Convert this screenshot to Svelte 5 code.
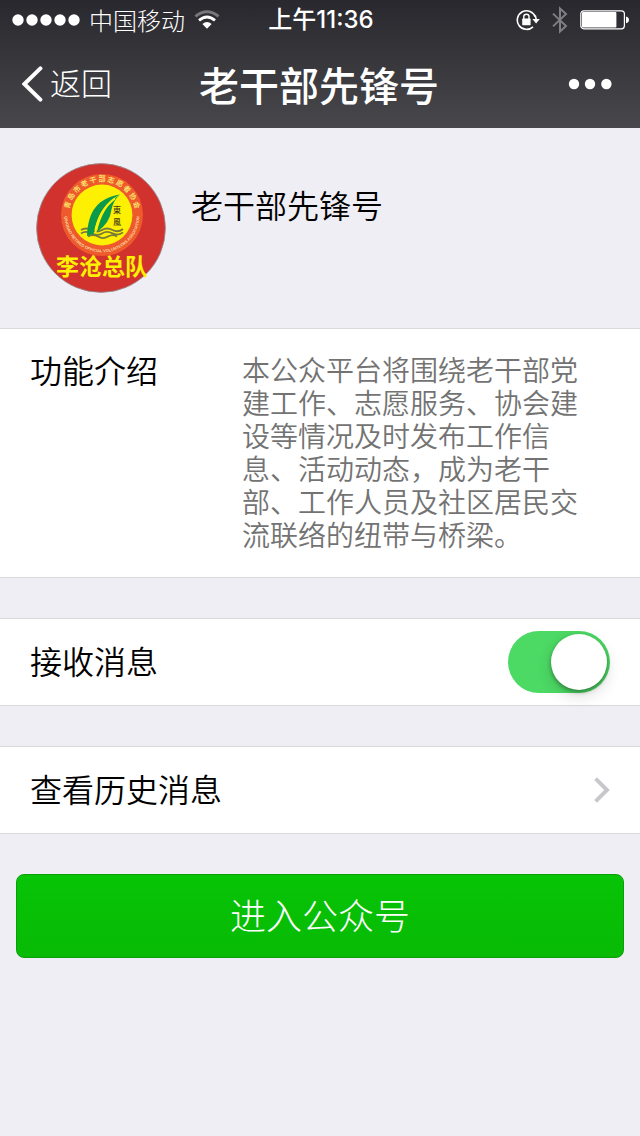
<script lang="ts">
  const account = {
    name: '老干部先锋号',
    intro:
      '本公众平台将围绕老干部党建工作、志愿服务、协会建设等情况及时发布工作信息、活动动态，成为老干部、工作人员及社区居民交流联络的纽带与桥梁。'
  };

  const signal = [0, 1, 2, 3, 4];

  let receive = $state(true);
</script>

<div class="page">
  <header class="top">
    <div class="status">
      <div class="status-left">
        <svg class="signal" viewBox="0 0 68 12" aria-hidden="true">
          {#each signal as i}
            <circle cx={6 + i * 14} cy="6" r="5.7" />
          {/each}
        </svg>
        <span class="carrier">中国移动</span>
        <svg class="wifi" viewBox="0 0 26 20" aria-hidden="true">
          <path class="faint" d="M1.4 6.4 Q13 -3 24.6 6.4" />
          <path d="M5 10.4 Q13 3.6 21 10.4" />
          <path class="solid" d="M8.4 14 Q13 9.8 17.6 14 L13 18.8 Z" />
        </svg>
      </div>
      <span class="time">上午11:36</span>
      <div class="status-right">
        <svg class="lock" viewBox="0 0 24 22" aria-hidden="true">
          <path d="M19.4 8 A9.3 9.3 0 1 0 17 17.8" />
          <path class="solid" d="M16.4 10 H23.8 L20.1 14.4 Z" />
          <path d="M19.2 6.4 L20.2 10.4" />
          <rect class="solid" x="6.2" y="9.6" width="8.4" height="6.6" rx="0.6" />
          <path class="thin" d="M7.8 10 V7.6 Q7.8 5.2 10.4 5.2 T13 7.6 V10" />
        </svg>
        <svg class="bluetooth" viewBox="0 0 16 28" aria-hidden="true">
          <path d="M1 7.6 L14 20 L8 25.4 V2.6 L14 8 L1 20.4" />
        </svg>
        <svg class="battery" viewBox="0 0 50 20" aria-hidden="true">
          <rect class="shell" x="0.8" y="0.8" width="43.6" height="18" rx="3" />
          <rect x="2" y="2" width="34.4" height="15.6" rx="1" />
          <path d="M46 6.4 Q49 7 49 9.8 Q49 12.6 46 13.2 Z" />
        </svg>
      </div>
    </div>

    <nav class="nav">
      <button class="back" type="button">
        <svg viewBox="0 0 22 36" aria-hidden="true">
          <path d="M18.4 2.4 L2.4 18 L18.4 33.6" />
        </svg>
        <span>返回</span>
      </button>
      <h1>{account.name}</h1>
      <button class="more" type="button" aria-label="更多">
        <svg viewBox="0 0 44 12" aria-hidden="true">
          <circle cx="6" cy="6" r="5.2" />
          <circle cx="22" cy="6" r="5.2" />
          <circle cx="38.4" cy="6" r="5.2" />
        </svg>
      </button>
    </nav>
  </header>

  <main>
    <section class="profile">
      <svg class="avatar" viewBox="0 0 130 130" role="img" aria-label="李沧总队">
        <defs>
          <path id="ring-top" d="M33.6 60 A33.4 33.4 0 1 1 98.4 60" />
          <path id="ring-bottom" d="M29 45 A37.6 37.6 0 1 0 103 45" />
        </defs>
        <circle cx="65" cy="65" r="64.4" fill="#d2322d" stroke="#8d9092" stroke-width="0.8" />
        <circle cx="66" cy="52" r="41" fill="#ee5a2c" />
        <circle cx="66" cy="52" r="30.4" fill="#fdf003" />
        <text class="ring-cn">
          <textPath href="#ring-top" startOffset="50%">青 岛 市 老 干 部 志 愿 者 协 会</textPath>
        </text>
        <text class="ring-en">
          <textPath href="#ring-bottom" startOffset="50%">QINGDAO RETIRED OFFICIAL VOLUNTEERS ASSOCIATION</textPath>
        </text>
        <g class="waves">
          <path d="M45 67 q5 -3 10.5 0 t10.5 0 t10.5 0 t10.5 -1" />
          <path d="M45 70.4 q5 -3 10.5 0 t10.5 0 t10.5 0 t10.5 -1" />
          <path d="M52 73.6 q5 -3 10 0 t10 0 t9 0" />
        </g>
        <path d="M51 73 C52 48 62 35 84 31.5 Q63 42 57.5 71 Z" fill="#0b9a4c" />
        <path d="M61 69 Q74 60 75.4 47 Q77 38 84 31.5 Q66 44 61 69 Z" fill="#0b9a4c" />
        <path d="M59.4 70 Q62 48 79 35.4" fill="none" stroke="#fdf003" stroke-width="2" />
        <text class="brush" x="81" y="50">東</text>
        <text class="brush" x="81" y="62">風</text>
        <text class="team" x="66" y="112">李沧总队</text>
      </svg>
      <h2>{account.name}</h2>
    </section>

    <section class="panel intro">
      <h3>功能介绍</h3>
      <p>{account.intro}</p>
    </section>

    <label class="panel row">
      <span>接收消息</span>
      <input class="switch" type="checkbox" role="switch" bind:checked={receive} />
    </label>

    <a class="panel row" href="#history">
      <span>查看历史消息</span>
      <svg class="chevron" viewBox="0 0 16 26" aria-hidden="true">
        <path d="M1.6 1.6 L13 13 L1.6 24.4" />
      </svg>
    </a>

    <div class="actions">
      <button class="enter" type="button">进入公众号</button>
    </div>
  </main>
</div>

<style>
  :global(body) {
    background: #efeef4;
  }

  .page {
    min-height: 100vh;
    background: #efeef4;
    color: #000;
    font-family: 'Noto Sans CJK SC', sans-serif;
    font-weight: 350;
  }

  h1,
  h2,
  h3,
  p {
    margin: 0;
    font-weight: 350;
  }

  button {
    padding: 0;
    border: 0;
    background: none;
    color: inherit;
    font: inherit;
    cursor: pointer;
  }

  svg {
    display: block;
    flex: none;
  }

  /* header */
  .top {
    background: linear-gradient(#29282e, #48474b);
    color: #fff;
  }

  .status,
  .nav {
    display: grid;
    grid-template-columns: 1fr auto 1fr;
    align-items: center;
  }

  .status {
    height: 40px;
    padding: 0 10px 0 12px;
    line-height: 40px;
  }

  .status-left,
  .status-right {
    display: flex;
    align-items: center;
  }

  .status-left {
    gap: 9px;
  }

  .status-right {
    justify-content: flex-end;
    gap: 12px;
  }

  .carrier {
    font-size: 24px;
    font-weight: 300;
  }

  .time {
    font-family: Inter, 'Noto Sans CJK SC', sans-serif;
    font-size: 24px;
    font-weight: 500;
  }

  .signal {
    width: 68px;
    height: 12px;
    fill: #fff;
  }

  .wifi {
    width: 26px;
    height: 20px;
    fill: none;
    stroke: #fff;
    stroke-width: 2.8;
  }

  .wifi .faint {
    stroke: #77767b;
  }

  .wifi .solid,
  .lock .solid {
    fill: #fff;
    stroke: none;
  }

  .lock {
    width: 24px;
    height: 22px;
    fill: none;
    stroke: #fff;
    stroke-width: 1.6;
  }

  .lock .thin {
    stroke-width: 1.4;
  }

  .bluetooth {
    width: 16px;
    height: 28px;
    fill: none;
    stroke: #807f84;
    stroke-width: 2;
  }

  .battery {
    width: 50px;
    height: 20px;
    fill: #fff;
  }

  .battery .shell {
    fill: none;
    stroke: #fff;
    stroke-width: 1.2;
  }

  .nav {
    height: 88px;
    padding: 0 24px 0 22px;
  }

  .back {
    justify-self: start;
    display: flex;
    align-items: center;
    gap: 6px;
    font-size: 31px;
    font-weight: 300;
    line-height: 44px;
  }

  .back span {
    padding-bottom: 4px;
  }

  .back svg {
    width: 22px;
    height: 36px;
    fill: none;
    stroke: #fff;
    stroke-width: 4;
    stroke-linecap: round;
  }

  .nav h1 {
    font-size: 40px;
    font-weight: 500;
    line-height: 88px;
  }

  .more {
    justify-self: end;
    padding: 16px 4px;
  }

  .more svg {
    width: 44px;
    height: 12px;
    fill: #fff;
  }

  /* profile */
  .profile {
    display: flex;
    align-items: flex-start;
    gap: 25px;
    padding: 35px 36px;
  }

  .avatar {
    width: 130px;
    height: 130px;
  }

  .profile h2 {
    padding-top: 20px;
    font-size: 32px;
    line-height: 42px;
  }

  .avatar text {
    text-anchor: middle;
  }

  .ring-cn {
    fill: #fbe36a;
    font-size: 7px;
    font-weight: 700;
  }

  .ring-en {
    fill: #fbd9a0;
    font-family: 'Liberation Sans', sans-serif;
    font-size: 4px;
    font-weight: 700;
  }

  .brush {
    fill: #3d3a1a;
    font-size: 8px;
    font-weight: 500;
  }

  .team {
    fill: #fdf003;
    font-size: 23px;
    font-weight: 700;
  }

  .waves {
    fill: none;
    stroke: #77793c;
    stroke-width: 1.8;
  }

  /* panels */
  .panel {
    box-sizing: border-box;
    border: solid #d9d9d9;
    border-width: 1px 0;
    background: #fff;
    color: #000;
  }

  .panel + .panel {
    margin-top: 40px;
  }

  .intro {
    display: grid;
    grid-template-columns: 212px 1fr;
    padding: 24px 48px 26px 30px;
  }

  .intro h3 {
    font-size: 32px;
    line-height: 32px;
  }

  .intro p {
    color: #737373;
    font-size: 28px;
    line-height: 33px;
  }

  .row {
    display: flex;
    align-items: center;
    justify-content: space-between;
    height: 88px;
    padding: 0 30px;
    font-size: 32px;
    line-height: 44px;
    text-decoration: none;
    cursor: pointer;
  }

  .row span {
    padding-bottom: 4px;
  }

  .switch {
    appearance: none;
    display: flex;
    align-items: center;
    box-sizing: border-box;
    width: 102px;
    height: 62px;
    margin: 0;
    padding: 0 3px;
    border-radius: 31px;
    background: #e5e5e5;
    cursor: pointer;
  }

  .switch::before {
    content: '';
    width: 56px;
    height: 56px;
    border-radius: 50%;
    background: #fff;
    box-shadow:
      0 2px 4px rgba(0, 0, 0, 0.35),
      0 6px 16px rgba(0, 0, 0, 0.14);
  }

  .switch:checked {
    justify-content: flex-end;
    background: #4cd964;
  }

  .chevron {
    width: 16px;
    height: 26px;
    fill: none;
    stroke: #c7c7cc;
    stroke-width: 4;
  }

  .actions {
    padding: 40px 16px;
  }

  .enter {
    box-sizing: border-box;
    width: 100%;
    height: 84px;
    padding-bottom: 4px;
    border: 1px solid #0a9f0a;
    border-radius: 8px;
    background: linear-gradient(#07c406, #08ba05);
    color: #fff;
    font-size: 36px;
    font-weight: 300;
    line-height: 78px;
  }
</style>
